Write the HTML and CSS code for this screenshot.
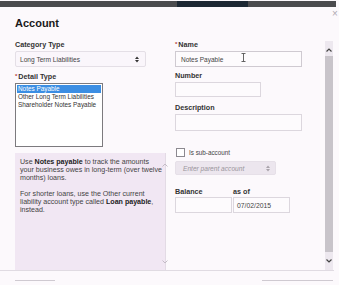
FILE: index.html
```html
<!DOCTYPE html>
<html>
<head>
<meta charset="utf-8">
<title>Account</title>
<link rel="stylesheet" href="styles.css">
</head>
<body>
<div class="topbar"><div class="topbar-seg"></div></div>
<div class="close">×</div>
<div class="main">
  <div class="content">
    <h1 class="title">Account</h1>
    <div class="form">
      <div class="col col-left">
        <div class="label">Category Type</div>
        <div class="select select-cat">
          <span>Long Term Liabilities</span>
          <svg class="updown" width="4" height="7" viewBox="0 0 4 7"><path d="M0 3 L2 0.5 L4 3 Z M0 4 L2 6.5 L4 4 Z" fill="#333"/></svg>
        </div>
        <div class="label label-detail"><span class="req">*</span>Detail Type</div>
        <div class="listbox">
          <div class="opt opt-sel">Notes Payable</div>
          <div class="opt">Other Long Term Liabilities</div>
          <div class="opt">Shareholder Notes Payable</div>
        </div>
        <div class="help">
          <div class="help-text">
            <p>Use <b>Notes payable</b> to track the amounts<br>your business owes in long-term (over twelve<br>months) loans.</p>
            <p>For shorter loans, use the Other current<br>liability account type called <b>Loan payable</b>,<br>instead.</p>
          </div>
          <div class="help-scroll">
            <svg width="6" height="4" viewBox="0 0 6 4"><path d="M0.5 3.5 L3 1 L5.5 3.5" fill="none" stroke="#c4bcc6" stroke-width="1"/></svg>
            <svg width="6" height="4" viewBox="0 0 6 4"><path d="M0.5 0.5 L3 3 L5.5 0.5" fill="none" stroke="#c4bcc6" stroke-width="1"/></svg>
          </div>
        </div>
      </div>
      <div class="col col-right">
        <div class="label"><span class="req">*</span>Name</div>
        <div class="input input-name">
          <span>Notes Payable</span>
          <svg class="ibeam" width="5" height="9" viewBox="0 0 5 9"><path d="M0.5 0.5 H4.5 M2.5 0.5 V8.5 M0.5 8.5 H4.5" fill="none" stroke="#555" stroke-width="0.9"/></svg>
        </div>
        <div class="label label-number">Number</div>
        <div class="input input-number"></div>
        <div class="label label-desc">Description</div>
        <div class="input input-desc"></div>
        <div class="check-row">
          <div class="checkbox"></div>
          <span class="check-text">Is sub-account</span>
        </div>
        <div class="select select-parent">
          <span class="placeholder">Enter parent account</span>
          <svg class="updown" width="4" height="7" viewBox="0 0 4 7"><path d="M0 3 L2 0.5 L4 3 Z M0 4 L2 6.5 L4 4 Z" fill="#a9a3ab"/></svg>
        </div>
        <div class="balance-row">
          <div class="bal-col bal-first">
            <div class="label label-bal">Balance</div>
            <div class="input input-bal"></div>
          </div>
          <div class="bal-col bal-second">
            <div class="label label-bal">as of</div>
            <div class="input input-date"><span>07/02/2015</span></div>
          </div>
        </div>
      </div>
    </div>
  </div>
  <div class="scrollbar">
    <div class="sb-btn sb-up">
      <svg width="6" height="4" viewBox="0 0 6 4"><path d="M0.5 3.5 L3 1 L5.5 3.5" fill="none" stroke="#444" stroke-width="1.2"/></svg>
    </div>
    <div class="sb-thumb"></div>
    <div class="sb-btn sb-down">
      <svg width="6" height="4" viewBox="0 0 6 4"><path d="M0.5 0.5 L3 3 L5.5 0.5" fill="none" stroke="#444" stroke-width="1.2"/></svg>
    </div>
  </div>
</div>
<div class="footer">
  <div class="btn btn-left"></div>
  <div class="btn btn-right"></div>
</div>
</body>
</html>
```
FILE: styles.css
```css
html, body {
  margin: 0;
  padding: 0;
}
body {
  width: 339px;
  height: 285px;
  overflow: hidden;
  background: #fcf9fc;
  font-family: "Liberation Sans", Arial, sans-serif;
  color: #333;
  position: relative;
}
.topbar {
  margin-top: 1px;
  height: 6px;
  width: 336px;
  background: #4b4b4e;
  display: flex;
}
.topbar-seg {
  margin-left: 177px;
  width: 71px;
  background: #1c2733;
}
.close {
  position: absolute;
  top: 9px;
  left: 332px;
  font-size: 10px;
  line-height: 10px;
  color: #b0aab2;
}
.main {
  display: flex;
  height: 263px;
  width: 334px;
  border-bottom: 1px solid #e0dbe2;
}
.content {
  width: 325px;
  display: flex;
  flex-direction: column;
}
.title {
  margin: 0;
  padding: 10px 15px 0;
  font-size: 11px;
  line-height: 13px;
  font-weight: bold;
  color: #1a1a1a;
}
.form {
  flex: 1;
  display: flex;
  gap: 9px;
  padding-left: 15px;
  margin-top: 10px;
}
.col {
  display: flex;
  flex-direction: column;
}
.col-left {
  width: 151px;
}
.col-right {
  width: 128px;
}
.label {
  font-size: 7.2px;
  line-height: 9px;
  height: 9px;
  font-weight: bold;
  color: #333;
  margin-bottom: 2px;
  white-space: nowrap;
}
.req {
  color: #b03a3a;
  font-size: 6px;
  vertical-align: 1px;
  margin-right: 1px;
}
.label-detail {
  margin-top: 5px;
}
.select {
  display: flex;
  align-items: center;
  box-sizing: border-box;
  border: 1px solid #e4dfe6;
  border-radius: 2px;
  font-size: 6.6px;
  color: #444;
}
.select-cat {
  width: 131px;
  height: 16px;
  padding-left: 4px;
  background: #faf6fb;
}
.select-cat .updown {
  margin-left: auto;
  margin-right: 6px;
}
.listbox {
  width: 88px;
  height: 64px;
  box-sizing: border-box;
  border: 1px solid #7c7a7e;
  background: #fff;
  padding: 1px;
}
.opt {
  font-size: 6.4px;
  line-height: 8px;
  height: 8px;
  padding-left: 1px;
  color: #333;
  white-space: nowrap;
}
.opt-sel {
  background: #3b8ee3;
  color: #fff;
}
.help {
  margin-top: 6px;
  width: 151px;
  flex: 1;
  box-sizing: border-box;
  background: #f1e7f3;
  border-right: 1px solid #e3dbe5;
  display: flex;
}
.help-text {
  flex: 1;
  padding: 5px 0 0 5px;
  font-size: 7.1px;
  line-height: 8px;
  color: #444;
  white-space: nowrap;
}
.help-text p {
  margin: 0 0 8px;
}
.help-text b {
  color: #222;
}
.help-scroll {
  width: 10px;
  display: flex;
  flex-direction: column;
  justify-content: space-between;
  align-items: center;
  padding: 10px 0 6px;
}
.input {
  box-sizing: border-box;
  border: 1px solid #dcd7de;
  background: #fdfbfd;
  font-size: 6.5px;
  color: #444;
  display: flex;
  align-items: center;
}
.input-name {
  width: 127px;
  height: 16px;
  padding-left: 5px;
  border-color: #cfcad1;
  position: relative;
}
.ibeam {
  position: absolute;
  left: 65px;
  top: 1px;
}
.label-number {
  margin-top: 4px;
}
.input-number {
  width: 86px;
  height: 15px;
}
.label-desc {
  margin-top: 6px;
}
.input-desc {
  width: 127px;
  height: 17px;
}
.check-row {
  margin-top: 17px;
  height: 9px;
  display: flex;
  align-items: center;
}
.checkbox {
  width: 9px;
  height: 9px;
  box-sizing: border-box;
  border: 1px solid #8c8990;
  background: #fff;
  margin-left: 1px;
}
.check-text {
  margin-left: 4px;
  font-size: 6.3px;
  color: #444;
}
.select-parent {
  margin-top: 4px;
  width: 101px;
  height: 14px;
  padding-left: 7px;
  background: #ece6ee;
  border-color: #e6e0e8;
}
.placeholder {
  font-style: italic;
  color: #9a959c;
}
.select-parent .updown {
  margin-left: auto;
  margin-right: 5px;
}
.balance-row {
  margin-top: 12px;
  display: flex;
  gap: 1px;
}
.bal-col {
  display: flex;
  flex-direction: column;
}
.label-bal {
  margin-bottom: 1px;
}
.input-bal {
  width: 57px;
  height: 16px;
}
.input-date {
  width: 57px;
  height: 16px;
  padding-left: 3px;
  font-size: 6.8px;
}
.scrollbar {
  width: 8px;
  margin-top: 34px;
  display: flex;
  flex-direction: column;
  background: #ede8ef;
}
.sb-btn {
  display: flex;
  align-items: center;
  justify-content: center;
}
.sb-up {
  height: 15px;
  padding-top: 2px;
  box-sizing: border-box;
}
.sb-thumb {
  flex: 1;
  background: #c8c4ca;
}
.sb-down {
  height: 18px;
}
.footer {
  display: flex;
  padding: 9px 0 0 15px;
}
.btn {
  height: 5px;
  border-top: 1px solid #cfcad1;
}
.btn-left {
  width: 40px;
}
.btn-right {
  width: 71px;
  margin-left: auto;
  margin-right: 6px;
}
```
